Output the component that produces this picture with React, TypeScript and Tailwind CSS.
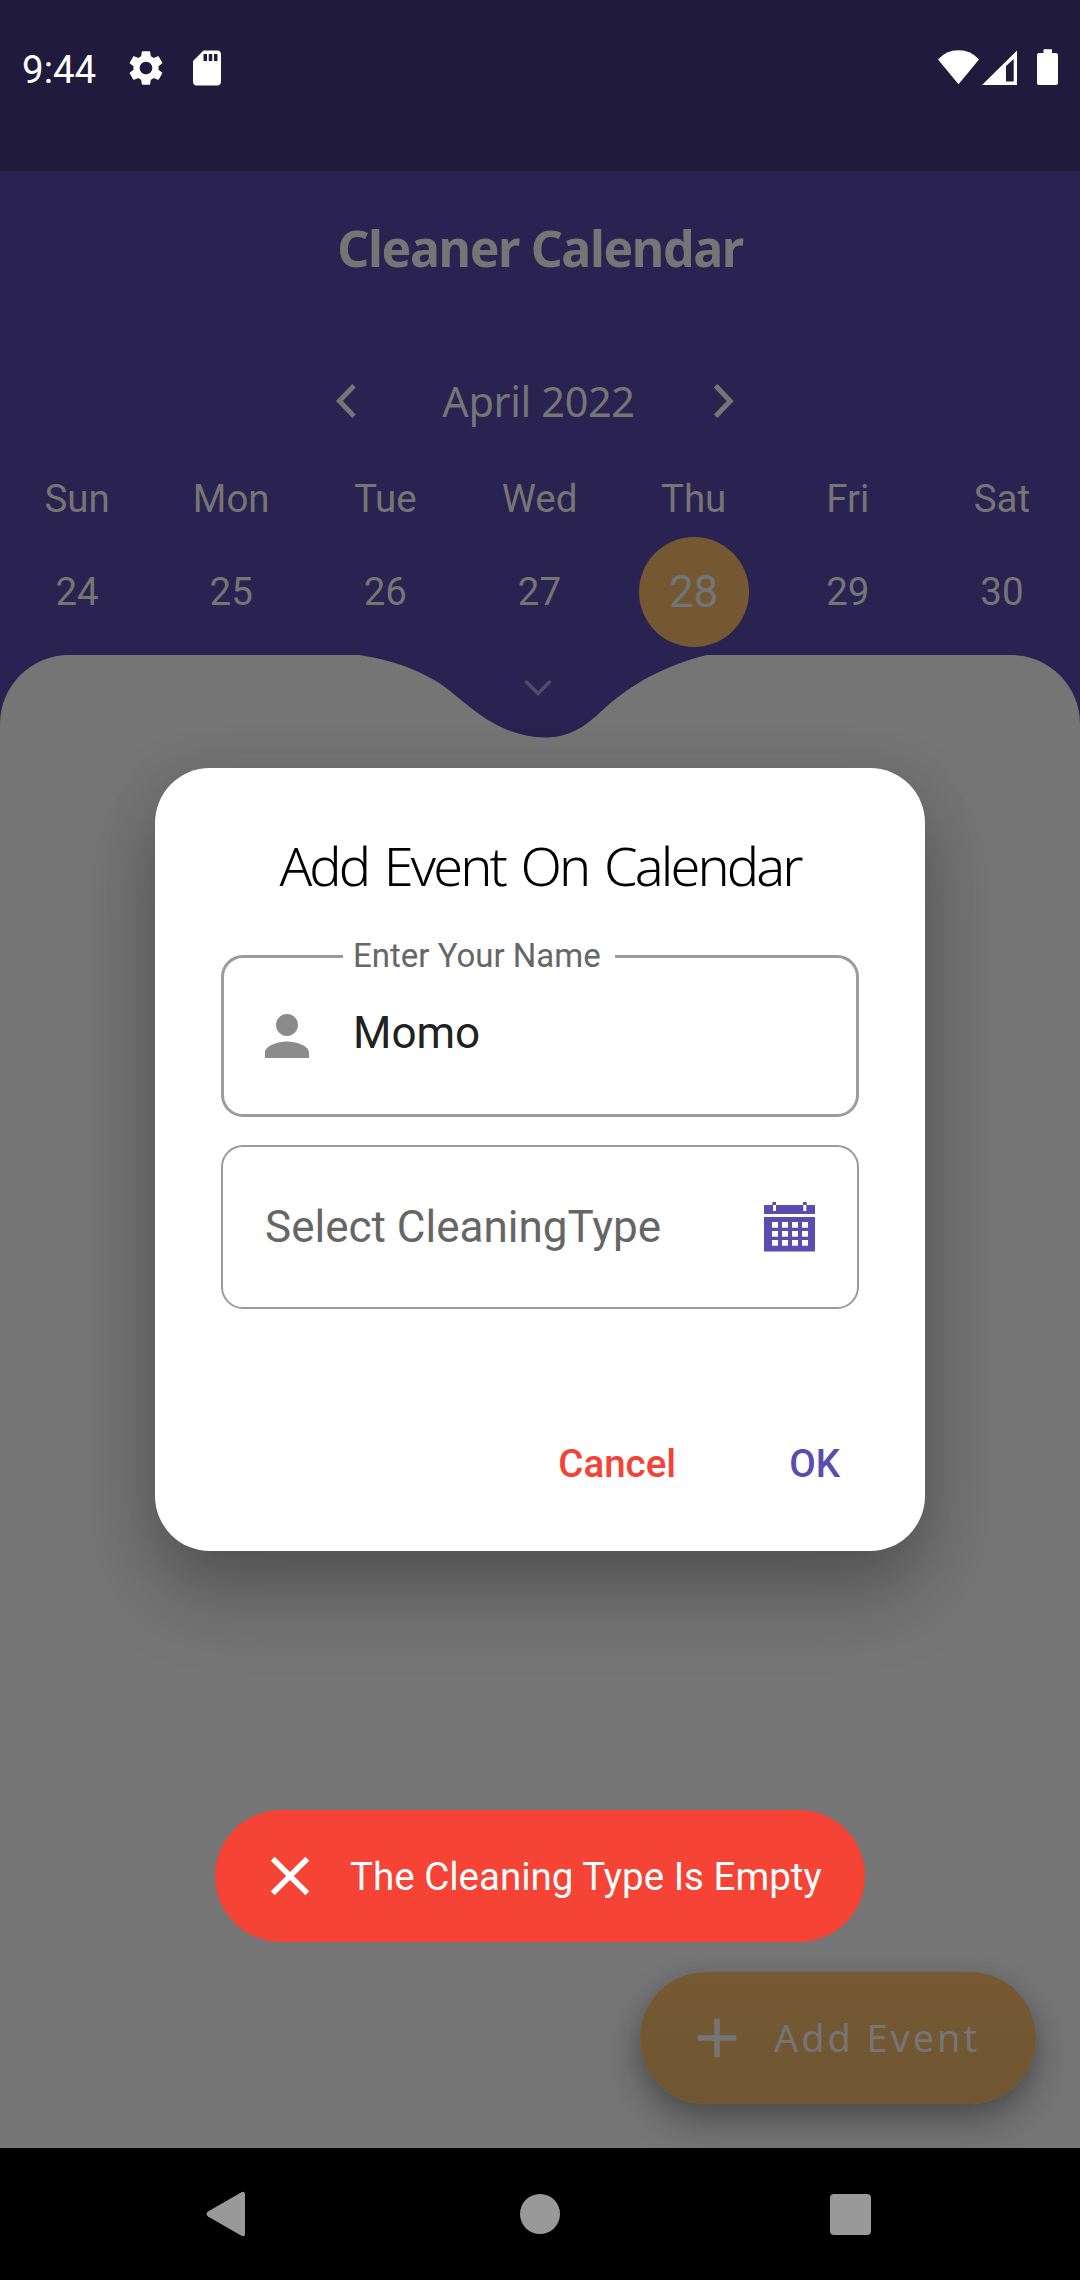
import { MdAdd, MdClose, MdPerson, MdSdCard, MdSettings } from "react-icons/md";

const days = [
  { name: "Sun", date: 24 },
  { name: "Mon", date: 25 },
  { name: "Tue", date: 26 },
  { name: "Wed", date: 27 },
  { name: "Thu", date: 28, selected: true },
  { name: "Fri", date: 29 },
  { name: "Sat", date: 30 },
];

function StatusBar() {
  return (
    <div className="flex h-[171px] items-start justify-between bg-[#201a3d] text-white">
      <div className="flex items-start pl-[22px]">
        <span className="w-[74px] text-[38.5px] leading-[140px]">9:44</span>
        <MdSettings className="mt-[46.5px] ml-[29px] size-[42px]" />
        <MdSdCard className="mt-[46.5px] ml-[19px] size-[42px]" />
      </div>
      <svg className="mt-[48px] mr-[22px] h-[38px] w-[121px]" viewBox="937 48 121 38" fill="currentColor">
        <path d="M938 59.5Q946 50.3 958.5 50.3T979 59.5L958.5 84.3Z" />
        <path fillRule="evenodd" d="M982 85L1017 50.5V85ZM1006 66V81.5H1013.7V59Z" />
        <path d="M1043.5 49.3h8.5v3.7h4q2 0 2 2v28q0 2-2 2h-17q-2 0-2-2v-28q0-2 2-2h4.5z" />
      </svg>
    </div>
  );
}

function Arrow({ points }: { points: string }) {
  return (
    <svg className="size-[66px]" viewBox="0 0 66 66" fill="none">
      <polyline points={points} stroke="currentColor" strokeWidth="5" />
    </svg>
  );
}

function WeekHeader() {
  return (
    <div className="flex flex-col text-[#757575]">
      <h1 className="pt-[1.5px] text-center font-['Noto_Sans',sans-serif] text-[50px] leading-[151px] font-bold tracking-[-1.4px]">
        Cleaner Calendar
      </h1>
      <div className="mt-[44px] flex h-[66px] items-center pl-[314px]">
        <Arrow points="40,17.8 25.4,33 40,48.2" />
        <span className="w-[310px] pl-[7px] text-center font-['Noto_Sans',sans-serif] text-[41.5px] leading-[66px] tracking-[-0.4px]">
          April 2022
        </span>
        <Arrow points="25.6,17.8 40.2,33 25.6,48.2" />
      </div>
      <div className="mt-[42.5px] grid grid-cols-7 pr-px text-center text-[38.5px] leading-[46px]">
        {days.map((d) => (
          <span key={d.name}>{d.name}</span>
        ))}
      </div>
      <div className="mt-[14.5px] grid h-[110px] grid-cols-7 items-center justify-items-center pr-px text-[38.5px]">
        {days.map((d) =>
          d.selected ? (
            <span key={d.date} className="size-[110px] rounded-full bg-[#735831] text-center text-[44px] leading-[110px] text-[#717478]">
              {d.date}
            </span>
          ) : (
            <span key={d.date}>{d.date}</span>
          ),
        )}
      </div>
    </div>
  );
}

function EventSheet() {
  return (
    <div className="relative mt-[8.5px] h-[1493px] overflow-hidden rounded-t-[69px] bg-[#757575]">
      <svg className="absolute top-0 left-[350px] h-[86px] w-[370px]" viewBox="350 655 370 86" fill="none">
        <path
          d="M356 654.5C395 660 430 673 455 695C481 717 508 737.5 546 737.5C573 737.5 590 722 606 707C632 684 665 665 709 654.5Z"
          fill="#2a2250"
        />
        <path d="M526.5 682L538 693.5L549.5 682" stroke="#524c66" strokeWidth="3.4" strokeLinecap="round" />
      </svg>
      <button className="absolute right-[44px] bottom-[44px] flex h-[132px] w-[396px] items-center gap-[24px] rounded-full bg-linear-to-b from-[#755a34] to-[#6f5631] pl-[44px] text-[#757575] shadow-[0_18px_36px_rgba(0,0,0,0.3),0_4px_20px_rgba(0,0,0,0.1)]">
        <MdAdd className="size-[66px]" />
        <span className="pb-[2px] font-['Noto_Sans',sans-serif] text-[38px] leading-[66px] tracking-[2.9px] whitespace-nowrap">Add Event</span>
      </button>
    </div>
  );
}

function CalendarGlyph() {
  return (
    <svg className="h-[50px] w-[51px]" viewBox="0 0 51 50" fill="#5b4daf">
      <path
        fillRule="evenodd"
        d="M0 3H8.3V0H12V3H39V0H42.7V3H51V12H0ZM9 3V9H12V3ZM39.3 3V9H42.3V3Z"
      />
      <path d="M0 15H51V49.5H0Z" />
      {[20, 29, 38].map((y) =>
        [8, 18, 28, 38].map((x) => <rect key={`${x}-${y}`} x={x} y={y} width="6" height="5.7" fill="#fff" />),
      )}
    </svg>
  );
}

function AddEventDialog() {
  return (
    <div className="absolute top-[768px] left-[155px] flex h-[783px] w-[770px] flex-col rounded-[55px] bg-white px-[66px] pt-[60px] shadow-[0_40px_80px_rgba(0,0,0,0.27),0_10px_60px_rgba(0,0,0,0.08)]">
      <h2 className="text-center font-['Noto_Sans',sans-serif] text-[54px] leading-[74px] font-[300] tracking-[-2.9px] whitespace-nowrap text-black [word-spacing:4.5px]">
        Add Event On Calendar
      </h2>
      <div className="relative mt-[53px] flex h-[162px] items-center rounded-[22px] border-[3px] border-[#9b9b9b] pl-[30px]">
        <span className="absolute -top-[24px] left-[119px] w-[272px] bg-white pl-[10px] text-[33px] leading-[44px] whitespace-nowrap text-[#666]">
          Enter Your Name
        </span>
        <MdPerson className="size-[66px] text-[#8b8b8b]" />
        <span className="pb-[6px] pl-[33px] text-[44px] leading-[52px] text-[#212121]">Momo</span>
      </div>
      <div className="mt-[28px] flex h-[164px] items-center justify-between rounded-[22px] border-2 border-[#9b9b9b] pr-[42px] pl-[42px]">
        <span className="text-[44px] leading-[52px] whitespace-nowrap text-[#666]">Select CleaningType</span>
        <CalendarGlyph />
      </div>
      <div className="mt-[121.5px] flex justify-end gap-[113px] pr-[19px] text-[38.5px] leading-[66px] font-medium">
        <button className="text-[#f44336]">Cancel</button>
        <button className="text-[#5b4daf]">OK</button>
      </div>
    </div>
  );
}

function Toast() {
  return (
    <div className="absolute top-[1810px] left-[215px] flex h-[132px] w-[650px] items-center rounded-full bg-[#f54336] pl-[42px] text-white">
      <MdClose className="size-[66px]" />
      <span className="pt-[2px] pl-[27px] text-[38.5px] leading-[66px] whitespace-nowrap">The Cleaning Type Is Empty</span>
    </div>
  );
}

function NavigationBar() {
  return (
    <div className="flex h-[132px] items-center bg-black pl-[206px]">
      <svg className="h-[46px] w-[40px]" viewBox="0 0 40 46" fill="#999">
        <path d="M2 20.5L35.5 1.2Q39 -.3 39 3.5V42.5Q39 46.3 35.5 44.8L2 25.5Q-1 23 2 20.5Z" />
      </svg>
      <span className="ml-[274px] size-[40px] rounded-full bg-[#999]" />
      <span className="ml-[270px] size-[41px] rounded-[4px] bg-[#999]" />
    </div>
  );
}

export default function App() {
  return (
    <div className="relative flex h-[2280px] w-[1080px] flex-col overflow-hidden bg-[#2a2250] font-[Roboto,sans-serif]">
      <StatusBar />
      <WeekHeader />
      <EventSheet />
      <NavigationBar />
      <AddEventDialog />
      <Toast />
    </div>
  );
}
